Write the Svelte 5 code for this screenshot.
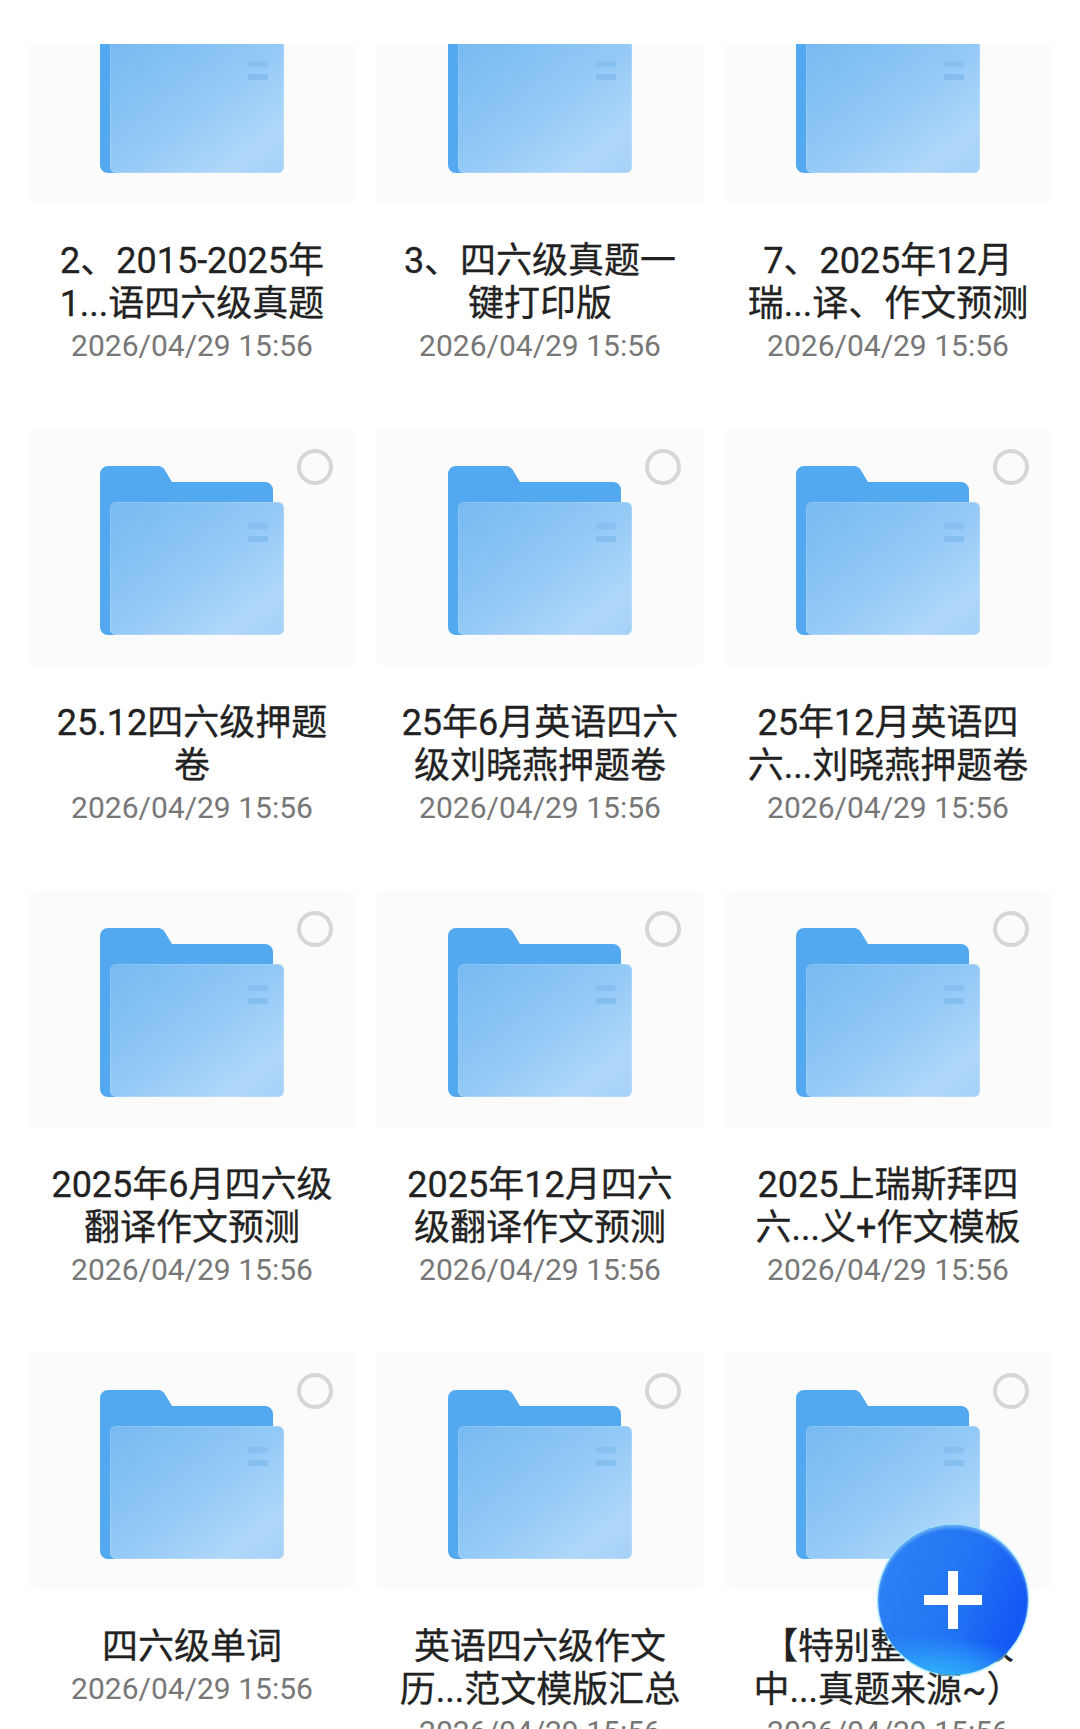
<script>
  const date = '2026/04/29 15:56';
  const items = [
    { lines: ['2、2015-2025年', '1...语四六级真题'] },
    { lines: ['3、四六级真题一', '键打印版'] },
    { lines: ['7、2025年12月', '瑞...译、作文预测'] },
    { lines: ['25.12四六级押题', '卷'] },
    { lines: ['25年6月英语四六', '级刘晓燕押题卷'] },
    { lines: ['25年12月英语四', '六...刘晓燕押题卷'] },
    { lines: ['2025年6月四六级', '翻译作文预测'] },
    { lines: ['2025年12月四六', '级翻译作文预测'] },
    { lines: ['2025上瑞斯拜四', '六...义+作文模板'] },
    { lines: ['四六级单词'] },
    { lines: ['英语四六级作文', '历...范文模版汇总'] },
    { lines: ['【特别整理四级', '中...真题来源~）'] }
  ];
</script>

<main class="page">
  <div class="grid">
    {#each items as item, i}
      <article class="item">
        <div class="thumb" class:clipped={i < 3}>
          <svg class="folder" viewBox="0 0 184 169" width="184" height="169" aria-hidden="true">
            <defs>
              <linearGradient id="front{i}" x1="0" y1="0" x2="1" y2="1">
                <stop offset="0" stop-color="#76b9f1" />
                <stop offset="0.5" stop-color="#93c9f6" />
                <stop offset="0.82" stop-color="#afd7fa" />
                <stop offset="1" stop-color="#a6d1f8" />
              </linearGradient>
            </defs>
            <path d="M0 8a8 8 0 0 1 8-8h50a8 8 0 0 1 6.500 3.500L72 16h93a8 8 0 0 1 8 8v137a8 8 0 0 1-8 8H8a8 8 0 0 1-8-8z" fill="#52a9ef" />
            <rect x="10" y="36" width="174" height="133" rx="6" fill="url(#front{i})" />
            <rect x="10.500" y="36.500" width="173" height="132" rx="5.500" fill="none" stroke="#fff" stroke-opacity="0.16" />
            <rect x="148" y="57" width="20" height="6" rx="1" fill="#76b5ea" opacity="0.45" />
            <rect x="148" y="70" width="20" height="6" rx="1" fill="#76b5ea" opacity="0.6" />
          </svg>
          {#if i >= 3}<span class="radio"></span>{/if}
        </div>
        <h3 class="title">
          {#each item.lines as line}<span class="line">{line}</span>{/each}
        </h3>
        <p class="date">{date}</p>
      </article>
    {/each}
  </div>

  <button class="fab" aria-label="新建">
    <svg viewBox="0 0 58 58" width="58" height="58" aria-hidden="true">
      <path d="M24 0h10v24h24v10H34v24H24V34H0V24h24z" fill="#fff" />
    </svg>
  </button>
</main>

<style>
  :global(body) {
    margin: 0;
    background: #fff;
  }

  .page {
    position: relative;
    width: 1080px;
    height: 1729px;
    overflow: hidden;
    background: #fff;
    font-family: Roboto, "Noto Sans CJK SC", sans-serif;
  }

  .grid {
    display: grid;
    grid-template-columns: repeat(3, 328px);
    grid-template-rows: 384px;
    grid-auto-rows: 462px;
    column-gap: 20px;
    padding: 44px 0 0 28px;
    align-items: start;
  }

  .item {
    display: flex;
    flex-direction: column;
    align-items: center;
    min-width: 0;
  }

  .thumb {
    position: relative;
    display: flex;
    align-items: flex-end;
    justify-content: center;
    flex: none;
    width: 100%;
    height: 238px;
    padding-bottom: 31px;
    box-sizing: border-box;
    overflow: hidden;
    background: #fbfbfb;
    border-radius: 8px;
  }

  .thumb.clipped {
    height: 160px;
    border-radius: 0 0 8px 8px;
  }

  .folder {
    flex: none;
    display: block;
  }

  .radio {
    position: absolute;
    top: 21px;
    right: 23px;
    width: 36px;
    height: 36px;
    box-sizing: border-box;
    border: 4px solid #d6d6d6;
    border-radius: 50%;
  }

  .title {
    margin: 36px 0 0;
    font-size: 36px;
    font-weight: 400;
    line-height: 43px;
    color: #222;
    text-align: center;
    white-space: nowrap;
    -webkit-text-stroke: 0.3px #222;
  }

  .line {
    display: block;
  }

  .date {
    margin: -2px 0 0;
    font-size: 30px;
    line-height: 43px;
    color: #777;
    white-space: nowrap;
  }

  .fab {
    position: absolute;
    left: 878px;
    top: 1525px;
    display: flex;
    align-items: center;
    justify-content: center;
    width: 150px;
    height: 150px;
    padding: 0;
    border: 0;
    border-radius: 50%;
    background:
      radial-gradient(120% 50% at 30% 108%, #38c3f8 0%, #2a9cf8 35%, rgba(42, 130, 248, 0) 70%),
      linear-gradient(110deg, #2f83f3 0%, #2273f4 55%, #1358f5 85%, #1a62f4 100%);
    box-shadow: 0 0 2px 1px #8fe4fb, inset 0 3px 3px rgba(150, 215, 250, 0.5);
  }
</style>
